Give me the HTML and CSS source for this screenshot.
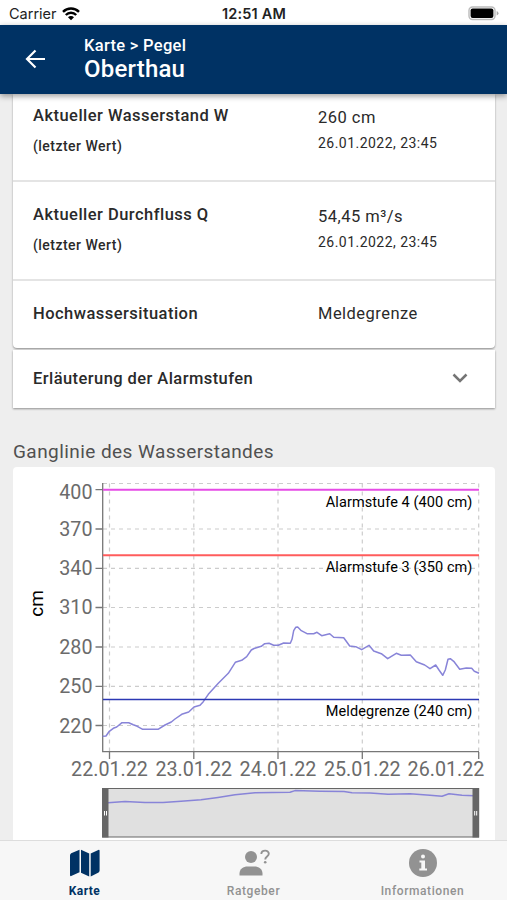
FILE: index.html
```html
<!DOCTYPE html>
<html lang="de">
<head>
    <meta charset="UTF-8">
    <meta name="viewport" content="width=device-width, initial-scale=1.0">
    <title>Pegel Oberthau</title>
    <link rel="stylesheet" href="styles.css">
</head>
<body>
    <div class="statusbar">
        <div class="carrier">
            <span>Carrier</span>
            <svg class="wifi" width="18" height="14" viewBox="0 0 18 14">
                <path d="M1 4.800a11.300 11.300 0 0 1 16 0M3.800 8a7.300 7.300 0 0 1 10.400 0" fill="none" stroke="#000" stroke-width="2.400"/>
                <path d="M9 13.3 6 10.3a4.2 4.2 0 0 1 6 0z"/>
            </svg>
        </div>
        <span class="clock">12:51 AM</span>
        <div class="battery">
            <svg width="31" height="15" viewBox="0 0 31 15">
                <rect x="1" y="1" width="26" height="12.5" rx="3.5" fill="#fff" stroke="#bbb" stroke-width="1.4"/>
                <rect x="2.6" y="2.6" width="22.8" height="9.3" rx="2"/>
                <path d="M28.7 5v4.5q1.8-.6 1.8-2.2T28.7 5z" fill="#aaa"/>
            </svg>
        </div>
    </div>
    <header>
        <svg class="back" width="22" height="22" viewBox="0 0 22 22">
            <path d="M20 11H2.500M10.500 2.500 2 11l8.500 8.500" fill="none" stroke="#fff" stroke-width="2.200"/>
        </svg>
        <div>
            <div class="breadcrumb">Karte &gt; Pegel</div>
            <h1>Oberthau</h1>
        </div>
    </header>
    <main>
        <section class="card">
            <div class="row">
                <div class="label">Aktueller Wasserstand W<small>(letzter Wert)</small></div>
                <div class="value">260 cm<small>26.01.2022, 23:45</small></div>
            </div>
            <div class="row">
                <div class="label">Aktueller Durchfluss Q<small>(letzter Wert)</small></div>
                <div class="value">54,45 m³/s<small>26.01.2022, 23:45</small></div>
            </div>
            <div class="row single">
                <div class="label">Hochwassersituation</div>
                <div class="value">Meldegrenze</div>
            </div>
        </section>
        <section class="accordion">
            <span>Erläuterung der Alarmstufen</span>
            <svg width="16" height="10" viewBox="0 0 16 10">
                <path d="M1.5 1.5 8 8l6.500-6.500" fill="none" stroke="#757575" stroke-width="2.500"/>
            </svg>
        </section>
        <h2>Ganglinie des Wasserstandes</h2>
        <section class="chart">
            <svg width="482" height="380" viewBox="13 467 482 380">
                <g class="grid">
                    <path d="M103 483.500H479M103 529H479M103 568.300H479M103 607.500H479M103 647H479M103 686.300H479M103 725.500H479"/>
                    <path d="M109.500 483.500V751M193.800 483.500V751M278 483.500V751M362.300 483.500V751M478.700 483.500V751"/>
                </g>
                <g class="axis">
                    <path d="M102.700 483V751.700H479"/>
                    <path d="M95.500 489.700h7M95.500 529h7M95.500 568.300h7M95.500 607.500h7M95.500 647h7M95.500 686.300h7M95.500 725.500h7"/>
                    <path d="M109.500 752v7M193.800 752v7M278 752v7M362.300 752v7M478.700 752v7"/>
                </g>
                <g class="tick y">
                    <text x="92.500" y="499">400</text>
                    <text x="92.500" y="535.500">370</text>
                    <text x="92.500" y="575">340</text>
                    <text x="92.500" y="614">310</text>
                    <text x="92.500" y="653.500">280</text>
                    <text x="92.500" y="693">250</text>
                    <text x="92.500" y="732.500">220</text>
                </g>
                <g class="tick">
                    <text x="109.500" y="775.500">22.01.22</text>
                    <text x="193.800" y="775.500">23.01.22</text>
                    <text x="278" y="775.500">24.01.22</text>
                    <text x="362.300" y="775.500">25.01.22</text>
                    <text x="446" y="775.500">26.01.22</text>
                </g>
                <text class="unit" transform="translate(42.500 603.500) rotate(-90)">cm</text>
                <polyline class="level" points="102.700,736.300 106,736 109.300,731.300 113.300,728.300 116.700,727 122,722.700 128.700,722.700 133.300,724.700 137.300,726.300 142.700,729.300 158,729.300 165,725 171.300,722 175,719 181.700,714.300 188.700,712 194,707 200,705.300 203.300,701.700 208.300,694.300 218.300,683.300 228.300,673.300 235.300,662.300 241.700,660.300 246.700,656.700 251.300,650 254,648.500 261.300,646.300 264.700,643.700 269,643.300 273.700,645.300 278.300,645.300 283.700,643 290.300,643.300 292,639.300 293.700,630.700 295.700,627.300 297.700,627 301.300,630.700 307,633.700 313.700,633.700 317,632.300 321.700,635.700 329.700,633.700 333.700,637.300 343.700,637.700 349.700,646 355.700,646.700 361.700,649.700 369,645.300 373.700,651 381.300,653.700 387.700,658.700 396.300,653.300 401.300,655.300 410.300,655 416.300,661.700 424.700,665 430,668.700 435.700,665 439,670 442.700,675.300 445.300,670 448,659.300 450.300,658.700 453.700,661.300 459.700,669.300 466.300,668 471.700,668.300 474.300,671.300 479,673.300"/>
                <path class="limit" d="M103 489.700H479" stroke="#e64be6"/>
                <path class="limit" d="M103 555.200H479" stroke="#ff5c5c"/>
                <path class="limit blue" d="M103 699.400H479" stroke="#2c38b4"/>
                <g class="limit-label">
                    <text x="472.500" y="506.500">Alarmstufe 4 (400 cm)</text>
                    <text x="472.500" y="572">Alarmstufe 3 (350 cm)</text>
                    <text x="472.500" y="716">Meldegrenze (240 cm)</text>
                </g>
                <rect x="102.700" y="788.500" width="376" height="48.500" fill="#e0e0e0" stroke="#666"/>
                <polyline class="level" points="108,802.800 125,801.600 145,802.600 163,802.600 181,801.300 201,799.800 218,797.400 235,794.700 255,792.800 290,792.300 295,790.600 320,791.200 344,791.500 352,792.700 370,793 388,794.200 410,793.800 430,795.200 442,796.300 449,793.800 462,795.300 474,795.700"/>
                <path d="M102 788h6.500v49.500H102zM472.500 788h6.500v49.500h-6.500z" fill="#666"/>
                <path d="M104.500 811v4.500M106.500 811v4.500M474.700 811v4.500M476.700 811v4.500" stroke="#fff"/>
            </svg>
        </section>
    </main>
    <nav>
        <a class="tab active">
            <svg width="30" height="28" viewBox="0 0 30 28" fill="currentColor">
                <path d="M0 6.500Q0 5 1.200 4.300L9.500.7v22.500L1.200 27Q0 27.500 0 26zM11 .7l8.200 3.800v23L11 23.700zM20.700 4.500 28.300.9Q29.600.4 29.600 1.800v19.700q0 1.300-1 1.900l-7.900 4.100z"/>
            </svg>
            <span>Karte</span>
        </a>
        <a class="tab">
            <svg width="32" height="28" viewBox="0 0 32 28" fill="currentColor">
                <circle cx="13" cy="8" r="6"/>
                <path d="M1.500 26.500v-2c0-4.500 4-7 8-7h7c4 0 8 2.500 8 7v2z"/>
                <path d="M23.300 5c.1-4.400 7.700-4.500 7.500-.2-.1 2.800-3.600 2.700-3.600 5.800" fill="none" stroke="currentColor" stroke-width="1.900"/>
                <circle cx="27.200" cy="13.300" r="1.300"/>
            </svg>
            <span>Ratgeber</span>
        </a>
        <a class="tab">
            <svg width="28" height="28" viewBox="0 0 28 28">
                <circle cx="14" cy="14" r="14" fill="currentColor"/>
                <path d="M14 5.500a2 2 0 1 1 0 4 2 2 0 0 1 0-4zM10.500 11.500h5.500v8h2v2.100h-7.700v-2.100h2v-5.900h-1.800z" fill="#f7f7f7"/>
            </svg>
            <span>Informationen</span>
        </a>
    </nav>
</body>
</html>
```

FILE: styles.css
```css
* {
    box-sizing: border-box;
}
body {
    display: flex;
    flex-direction: column;
    height: 900px;
    margin: 0;
    overflow: hidden;
    background-color: #eee;
    color: #2a2a2a;
    font-family: Roboto, sans-serif;
}
.statusbar {
    display: grid;
    grid-template-columns: 1fr auto 1fr;
    align-items: center;
    flex: none;
    height: 25px;
    padding: 2px 8px 0 9px;
    background-color: #fff;
    font: 14.500px Inter, sans-serif;
    color: #222;
}
.carrier {
    display: flex;
    align-items: center;
    gap: 5px;
}
.clock {
    font-weight: 600;
    letter-spacing: 0.200px;
}
.battery {
    display: flex;
    justify-content: flex-end;
}
header {
    display: flex;
    align-items: center;
    gap: 37px;
    flex: none;
    height: 69px;
    padding: 0 0 1px 25px;
    background-color: #003264;
    color: #fff;
    box-shadow: 0 2px 6px rgba(0, 0, 0, 0.4);
    z-index: 1;
}
.breadcrumb {
    margin-top: -2px;
    font-size: 16.500px;
    font-weight: 500;
    line-height: 21px;
    letter-spacing: 0.300px;
}
h1 {
    margin: 0;
    font-size: 24px;
    font-weight: 500;
    line-height: 26px;
    letter-spacing: 0.200px;
}
main {
    flex: 1;
    min-height: 0;
    padding: 0 12px 0 13px;
    overflow: hidden;
}
.card {
    background-color: #fff;
    border-radius: 0 0 4px 4px;
    box-shadow: 0 1px 2px rgba(0, 0, 0, 0.4);
}
.row {
    display: grid;
    grid-template-columns: 285px 1fr;
    height: 99px;
    padding: 22px 20px 0;
    border-bottom: 2px solid #e4e4e4;
    font-size: 16.500px;
    letter-spacing: 0.470px;
}
.row:first-child {
    height: 88px;
    padding-top: 11px;
}
.row.single {
    height: 67px;
    border-bottom: none;
}
.row small {
    display: block;
    font-size: 14px;
}
.label {
    font-weight: 500;
    line-height: 22px;
}
.label small {
    line-height: 38px;
}
.value {
    padding-top: 2px;
    line-height: 22px;
}
.value small {
    line-height: 29px;
}
.single .value {
    padding-top: 0;
}
.accordion {
    display: flex;
    align-items: center;
    justify-content: space-between;
    height: 58px;
    margin-top: 2px;
    padding: 0 27px 2px 20px;
    background-color: #fff;
    box-shadow: 0 1px 2px rgba(0, 0, 0, 0.4);
    font-size: 16.500px;
    font-weight: 500;
    letter-spacing: 0.430px;
}
h2 {
    margin: 31px 0 3px;
    color: #505050;
    font-size: 19px;
    font-weight: 400;
    line-height: 25px;
    letter-spacing: 0.430px;
}
.chart {
    background-color: #fff;
    border-radius: 4px 4px 0 0;
}
.chart svg {
    display: block;
}
.grid {
    fill: none;
    stroke: #ccc;
    stroke-width: 1.200;
    stroke-dasharray: 4 4;
}
.axis {
    fill: none;
    stroke: #777;
    stroke-width: 1.300;
}
.tick {
    fill: #6b6b6b;
    font-size: 19.700px;
    text-anchor: middle;
}
.tick.y {
    text-anchor: end;
}
.unit {
    fill: #000;
    font-size: 19px;
    text-anchor: middle;
}
.level {
    fill: none;
    stroke: #8884d8;
    stroke-width: 1.500;
    stroke-linejoin: round;
}
.limit {
    stroke-width: 2;
}
.limit.blue {
    stroke-width: 1.500;
}
.limit-label {
    fill: #000;
    font-size: 14.500px;
    letter-spacing: 0.080px;
    text-anchor: end;
}
nav {
    display: grid;
    grid-template-columns: repeat(3, 1fr);
    flex: none;
    height: 60px;
    padding-top: 8px;
    background-color: #f7f7f7;
    border-top: 1px solid #ddd;
}
.tab {
    display: flex;
    flex-direction: column;
    align-items: center;
    gap: 7px;
    color: #929292;
    font-size: 12px;
    font-weight: 500;
    letter-spacing: 0.600px;
}
.tab.active {
    color: #003264;
    font-weight: 700;
    letter-spacing: 0.450px;
}
```
